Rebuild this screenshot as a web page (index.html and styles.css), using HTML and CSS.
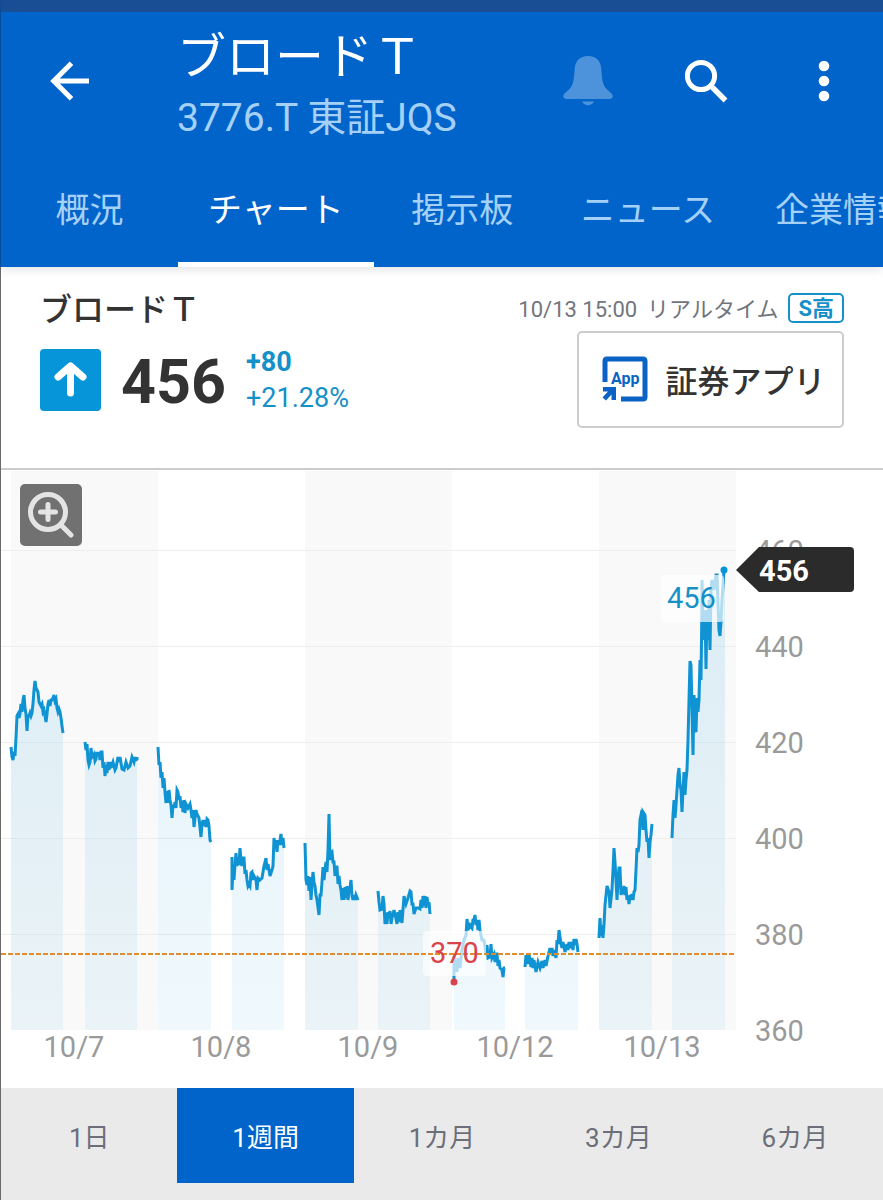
FILE: index.html
```html
<!DOCTYPE html>
<html lang="ja">
<head>
    <meta charset="UTF-8">
    <meta name="viewport" content="width=device-width, initial-scale=1.0">
    <title>ブロードＴ</title>
    <link rel="stylesheet" href="styles.css">
</head>
<body>
    <header class="header">
        <div class="appbar">
            <button class="icon-button back" aria-label="戻る">
                <svg width="40" height="40" viewBox="0 0 40 40" fill="none" stroke="#fff" stroke-width="5">
                    <path d="M39 20H4M21.500 2.200L3.700 20L21.500 37.800"/>
                </svg>
            </button>
            <div class="heading">
                <h1>ブロードＴ</h1>
                <p>3776.T 東証JQS</p>
            </div>
            <button class="icon-button" aria-label="通知">
                <svg width="50" height="50" viewBox="0 0 50 50" fill="#4d93db">
                    <path d="M25 0C16.500 0 12.500 5 11.800 12C11 21 11 27 7.500 32L1.500 37.500C-1 40 .5 43 3.500 43H46.500C49.500 43 51 40 48.500 37.500L42.500 32C39 27 39 21 38.200 12C37.500 5 33.500 0 25 0Z"/>
                    <path d="M19 45.500H31C29.500 48 27.500 49.200 25 49.200S20.500 48 19 45.500Z"/>
                </svg>
            </button>
            <button class="icon-button" aria-label="検索">
                <svg width="44" height="44" viewBox="0 0 44 44" fill="none" stroke="#fff">
                    <circle cx="17" cy="17" r="13.600" stroke-width="5"/>
                    <path d="M27 27L29 29" stroke-width="4"/>
                    <path d="M28.500 28.500L41.500 41.500" stroke-width="5.500"/>
                </svg>
            </button>
            <button class="icon-button" aria-label="メニュー">
                <svg width="12" height="42" viewBox="0 0 12 42" fill="#fff">
                    <circle cx="6" cy="6" r="5.300"/>
                    <circle cx="6" cy="21" r="5.300"/>
                    <circle cx="6" cy="36" r="5.300"/>
                </svg>
            </button>
        </div>
        <nav class="tabs">
            <a href="#">概況</a>
            <a href="#" class="active">チャート</a>
            <a href="#">掲示板</a>
            <a href="#">ニュース</a>
            <a href="#">企業情報</a>
        </nav>
    </header>

    <main>
        <section class="quote">
            <div class="quote-left">
                <h2>ブロードＴ</h2>
                <div class="price-row">
                    <svg class="up" width="61" height="62" viewBox="0 0 61 62">
                        <rect width="61" height="62" rx="4" fill="#0695d9"/>
                        <path d="M30.500 44V19M18 28L30.500 17L43 28" fill="none" stroke="#fff" stroke-width="7" stroke-linecap="round" stroke-linejoin="round"/>
                    </svg>
                    <span class="price">456</span>
                    <div class="change">
                        <b>+80</b>
                        <span>+21.28%</span>
                    </div>
                </div>
            </div>
            <div class="quote-right">
                <div class="meta">
                    <span>10/13 15:00</span>
                    <span>リアルタイム</span>
                    <span class="badge">S高</span>
                </div>
                <button class="app-button">
                    <svg width="46" height="46" viewBox="0 0 46 46">
                        <path d="M3 26V5Q3 3 5 3H41Q43 3 43 5V41Q43 43 41 43H19" fill="none" stroke="#0a62c4" stroke-width="5"/>
                        <path d="M1 31H14V44H9.500V38.500L4 44.500L.5 41.500L6 35.500H1Z" fill="#0a62c4"/>
                        <text x="9" y="28" class="app-text">App</text>
                    </svg>
                    証券アプリ
                </button>
            </div>
        </section>

        <section class="chart">
            <button class="zoom" aria-label="拡大">
                <svg width="62" height="62" viewBox="0 0 62 62" fill="none" stroke="#e4e4e4" stroke-width="5" stroke-linecap="round">
                    <circle cx="28" cy="28" r="17.500"/>
                    <path d="M41 41L51 51M20.500 28H35.500M28 20.500V35.500"/>
                </svg>
            </button>
            <svg class="plot" viewBox="1 470 882 618">
                <defs>
                    <linearGradient id="fade" gradientUnits="userSpaceOnUse" x1="0" y1="570" x2="0" y2="1030">
                        <stop offset="0" stop-color="#0695d9" stop-opacity=".12"/>
                        <stop offset="1" stop-color="#0695d9" stop-opacity=".06"/>
                    </linearGradient>
                </defs>

                <!-- 日ごとの背景 -->
                <g fill="#f9f9f9">
                    <rect x="11" y="471" width="147" height="559"/>
                    <rect x="305" y="471" width="147" height="559"/>
                    <rect x="599" y="471" width="137" height="559"/>
                </g>
                <path d="M1 550.500H736M1 646.500H736M1 742.500H736M1 838.500H736M1 934.500H736" stroke="#eee"/>

                <!-- 塗りつぶし -->
                <g fill="url(#fade)">
                    <path d="M11 1030V747L13 760L17 716L24 697L27 728L35 684L41 706L46 720L48 704L54 697L58 712L63 733V1030Z"/>
                    <path d="M85 1030V742L89 765L91 750L95 761L101 754L105 776L115 768L119 758L123 769L132 758L137 760V1030Z"/>
                    <path d="M158 1030V747L162 774L167 800L172 812L177 792L184 808L190 806L194 825L196 812L201 830L206 823L211 842V1030Z"/>
                    <path d="M232 1030V890L236 855L241 858L248 886L252 874L257 888L264 866L270 874L274 840L281 838L284 848V1030Z"/>
                    <path d="M305 1030V843L308 880L311 895L314 880L319 912L323 870L328 850L329 814L331 855L337 870L342 898L351 884L354 900L358 900V1030Z"/>
                    <path d="M378 1030V891L384 904L387 920L402 920L405 898L410 891L414 912L422 904L428 900L430 914V1030Z"/>
                    <path d="M454 1030V981L464 940L467 922L475 917L484 940L488 956L498 962L503 977L505 968V1030Z"/>
                    <path d="M525 1030V967L528 958L536 970L546 964L550 950L556 956L559 932L567 948L578 944V1030Z"/>
                    <path d="M599 1030V938L605 905L610 900L614 850L617 895L620 870L624 888L630 900L635 890L642 812L649 856L652 824V1030Z"/>
                    <path d="M672 1030V838L679 768L682 810L688 740L690 661L693 755L700 660L702 580L706 665L711 590L717 575L720 636L724 570H725V1030Z"/>
                </g>

                <!-- 株価の線 -->
                <g class="line">
                    <polyline points="11,747 12,757 13,760 14,752 15,756 16,738 17,716 18,714 19,718 20,714 21,704 22,712 23,700 24,695 25,708 26,714 27,731 28,716 29,716 30,713 31,716 32,713 33,704 34,690 35,681 36,688 37,690 38,692 39,702 40,704 41,706 42,704 43,712 44,710 45,716 46,722 47,714 48,704 49,700 50,706 51,700 52,700 53,698 54,695 55,701 56,699 57,708 58,712 59,709 60,712 61,718 62,726 63,733"/>
                    <polyline points="85,742 86,750 87,744 88,760 89,765 90,762 91,748 92,757 94,754 95,761 96,759 97,752 98,756 99,752 100,760 101,752 102,752 103,768 104,762 105,776 106,765 107,773 108,762 109,770 110,762 111,768 113,762 115,770 116,768 118,757 119,762 120,757 122,769 124,770 126,762 128,768 130,766 132,757 134,762 135,757 136,761 137,757 137,760"/>
                    <polyline points="158,747 159,765 160,762 161,778 162,772 163,788 164,778 165,792 166,803 167,791 168,803 169,790 170,800 171,805 172,818 173,805 174,808 175,802 176,808 177,790 178,792 179,800 180,796 181,808 182,801 183,812 184,800 185,813 186,804 188,808 190,804 191,810 192,818 193,810 194,827 195,818 196,810 197,814 198,816 199,818 201,837 202,824 203,820 204,826 205,820 206,827 207,819 208,820 209,826 210,840 211,842"/>
                    <polyline points="232,857 232,890 233,870 234,880 235,865 236,853 237,866 238,858 239,865 240,848 241,860 242,866 243,858 244,858 245,874 246,870 247,880 248,886 249,884 250,886 251,873 252,872 253,880 254,876 256,880 257,890 258,878 260,880 262,878 264,866 266,858 267,870 268,864 270,876 272,870 273,866 274,838 275,848 276,840 277,852 278,840 279,845 280,840 281,834 282,845 283,838 284,848"/>
                    <polyline points="305,843 306,880 307,885 308,876 309,891 310,877 311,900 312,885 313,872 314,882 315,886 316,895 317,900 319,915 320,895 321,895 322,882 323,867 324,880 325,870 326,862 327,872 328,850 329,814 330,860 331,853 332,852 333,862 334,862 335,876 336,867 337,867 338,884 339,876 340,885 341,890 342,900 343,888 344,900 345,887 346,898 347,886 348,900 349,890 350,888 351,880 352,896 353,900 354,895 355,900 356,895 358,900"/>
                    <polyline points="378,891 379,902 380,910 382,909 383,896 384,904 385,924 386,913 387,924 388,912 389,918 390,911 391,924 392,918 394,910 395,914 397,924 398,912 399,922 400,910 402,923 404,896 406,904 408,898 410,891 411,892 412,904 413,904 414,914 416,908 418,908 420,909 421,900 422,908 423,896 424,906 425,896 426,908 427,897 428,905 429,902 430,914"/>
                    <polyline points="454,981 454,955 455,972 456,960 457,972 458,958 460,968 462,950 464,940 466,935 467,919 468,930 470,925 472,928 473,920 474,920 475,915 476,925 477,920 478,930 479,920 480,930 482,940 484,940 486,955 487,945 488,958 490,957 491,944 492,958 494,954 495,962 496,954 497,954 498,966 499,960 500,968 502,970 503,977 504,968 505,968"/>
                    <polyline points="525,967 526,955 528,964 529,954 531,967 532,958 533,968 534,960 536,972 538,962 540,968 542,961 543,968 545,960 546,966 548,956 550,948 551,953 552,948 553,956 554,950 556,958 557,940 558,944 559,930 561,944 562,948 563,942 565,952 567,944 568,950 569,942 570,948 571,945 572,942 573,950 574,939 575,945 576,939 577,944 578,952"/>
                    <polyline points="599,938 600,918 601,936 602,925 603,938 604,925 605,905 607,886 609,892 610,908 612,890 613,870 614,848 615,862 616,880 617,900 618,880 619,868 620,868 621,895 622,888 623,894 624,886 625,895 626,887 627,900 628,896 629,904 630,895 631,900 632,894 633,900 634,892 635,890 636,870 637,848 638,852 639,845 640,820 641,815 642,810 643,830 643,812 645,815 646,830 647,842 648,838 649,858 650,842 651,835 652,824"/>
                    <polyline points="672,838 673,815 674,800 675,818 676,805 677,790 678,775 679,768 680,785 681,790 682,812 683,790 684,772 685,795 686,780 687,770 688,740 689,700 690,661 691,665 692,710 693,755 694,695 695,730 696,732 697,698 698,712 699,700 700,660 701,680 702,600 702,580 703,620 704,640 705,610 706,669 707,610 708,640 709,600 710,650 711,590 712,580 714,590 716,575 717,575 719,630 720,636 721,622 722,600 724,570"/>
                </g>

                <!-- 高値と安値 -->
                <g fill="#fff" fill-opacity=".68">
                    <rect x="661" y="575" width="63" height="47" rx="4"/>
                    <rect x="423" y="931" width="63" height="45" rx="4"/>
                </g>
                <circle cx="724" cy="570" r="3.500" fill="#0695d9"/>
                <circle cx="454" cy="982" r="3.500" fill="#d9434c"/>
                <path d="M1 954H736" stroke="#e08e2c" stroke-width="2" stroke-dasharray="5 2"/>
                <text x="667" y="608" fill="#1590c8">456</text>
                <text x="430" y="963" fill="#d9434c">370</text>

                <g class="axis">
                    <text x="755" y="561">460</text>
                    <text x="755" y="657">440</text>
                    <text x="755" y="753">420</text>
                    <text x="755" y="849">400</text>
                    <text x="755" y="945">380</text>
                    <text x="755" y="1041">360</text>
                </g>
                <g class="axis days">
                    <text x="74" y="1057">10/7</text>
                    <text x="221" y="1057">10/8</text>
                    <text x="368" y="1057">10/9</text>
                    <text x="515" y="1057">10/12</text>
                    <text x="662" y="1057">10/13</text>
                </g>

                <!-- 現在値 -->
                <path d="M736 570L759 547H850Q854 547 854 551V588Q854 592 850 592H759Z" fill="#2b2b2b"/>
                <text x="759" y="581" class="now">456</text>
            </svg>
        </section>

        <div class="range">
            <button>1日</button>
            <button class="active">1週間</button>
            <button>1カ月</button>
            <button>3カ月</button>
            <button>6カ月</button>
        </div>
    </main>
</body>
</html>
```
FILE: styles.css
```css
* {
    box-sizing: border-box;
}

body {
    margin: 0;
    min-height: 100vh;
    display: flex;
    flex-direction: column;
    overflow-x: hidden;
    background-color: #fff;
    font-family: Roboto, "Noto Sans CJK JP", sans-serif;
    color: #333;
}

h1, h2, p {
    margin: 0;
    font-weight: 400;
}

button {
    padding: 0;
    border: none;
    background: none;
    font-family: inherit;
    color: inherit;
    cursor: pointer;
}

/* ヘッダー */
.header {
    position: relative;
    z-index: 1;
    border-top: 12px solid #1a4e94;
    border-left: 1px solid #084a96;
    background-color: #0064cb;
    box-shadow: 0 2px 10px rgba(0, 0, 0, 0.12);
    color: #fff;
}

.appbar {
    display: flex;
    height: 138px;
}

.icon-button {
    display: flex;
    align-items: center;
    justify-content: center;
    width: 118px;
}

.back {
    width: 138px;
}

.heading {
    flex: 1;
    padding: 16px 0 0 38px;
    line-height: 60px;
    white-space: nowrap;
}

.heading h1 {
    font-size: 49px;
}

.heading p {
    font-size: 39px;
    color: #a5d0f8;
}

.tabs {
    display: flex;
    height: 117px;
    overflow: hidden;
}

.tabs a {
    flex: none;
    min-width: 177px;
    padding: 3px 30px 0;
    border-bottom: 5px solid transparent;
    font-size: 34px;
    line-height: 114px;
    text-align: center;
    text-decoration: none;
    color: #a5d0f8;
}

.tabs .active {
    border-bottom-color: #fff;
    color: #fff;
}

/* 株価 */
main {
    flex: 1;
    display: flex;
    flex-direction: column;
    border-left: 1px solid #6b6b6b;
}

.quote {
    display: flex;
    justify-content: space-between;
    padding: 22px 39px 40px;
    border-bottom: 2px solid #ccc;
}

.quote h2 {
    font-size: 32px;
    font-weight: 500;
    line-height: 42px;
}

.price-row {
    display: flex;
    align-items: center;
    margin-top: 13px;
}

.price {
    margin: 4px 20px 0;
    font-size: 61px;
    font-weight: 700;
    line-height: 62px;
}

.change {
    display: flex;
    flex-direction: column;
    font-size: 27px;
    line-height: 36px;
    color: #1590c8;
}

.quote-right {
    padding-top: 4px;
}

.meta {
    display: flex;
    justify-content: flex-end;
    gap: 10px;
    font-size: 22px;
    line-height: 34px;
    color: #72757d;
}

.badge {
    height: 30px;
    padding: 0 8px;
    border: 2px solid #1590c8;
    border-radius: 5px;
    font-weight: 700;
    line-height: 28px;
    color: #1590c8;
}

.app-button {
    display: flex;
    align-items: center;
    justify-content: center;
    gap: 17px;
    width: 267px;
    height: 97px;
    margin: 4px 0 0 auto;
    padding: 0 0 2px 7px;
    border: 2px solid #ccc;
    border-radius: 5px;
    font-size: 32px;
    font-weight: 500;
}

.app-text {
    font-size: 16px;
    font-weight: 700;
    fill: #0a62c4;
}

/* チャート */
.chart {
    position: relative;
}

.plot {
    display: block;
    width: 100%;
    font-size: 29px;
}

.zoom {
    position: absolute;
    top: 14px;
    left: 19px;
    width: 62px;
    height: 62px;
    border-radius: 5px;
    background-color: #717171;
}

.line {
    fill: none;
    stroke: #0f93d2;
    stroke-width: 3;
}

.axis {
    fill: #9a9a9a;
}

.days {
    text-anchor: middle;
}

.now {
    font-weight: 700;
    fill: #fff;
}

/* 期間 */
.range {
    flex: 1;
    display: flex;
    align-items: flex-start;
    padding-bottom: 18px;
    background-color: #eaeaea;
}

.range button {
    flex: 1;
    height: 95px;
    font-size: 26px;
    color: #6c6f7a;
}

.range .active {
    background-color: #0064cb;
    color: #fff;
}
```
